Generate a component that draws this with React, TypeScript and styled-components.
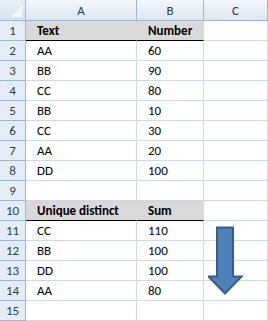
import { Fragment } from "react";
import styled, { createGlobalStyle } from "styled-components";

const GlobalStyle = createGlobalStyle`
  html, body {
    margin: 0;
    padding: 0;
    background: #ffffff;
  }
`;

const COLS = ["A", "B", "C"];

const ROWS: { a?: string; b?: string; head?: boolean }[] = [
  { a: "Text", b: "Number", head: true },
  { a: "AA", b: "60" },
  { a: "BB", b: "90" },
  { a: "CC", b: "80" },
  { a: "BB", b: "10" },
  { a: "CC", b: "30" },
  { a: "AA", b: "20" },
  { a: "DD", b: "100" },
  {},
  { a: "Unique distinct", b: "Sum", head: true },
  { a: "CC", b: "110" },
  { a: "BB", b: "100" },
  { a: "DD", b: "100" },
  { a: "AA", b: "80" },
  {},
];

const Sheet = styled.div`
  position: relative;
  display: grid;
  grid-template-columns: 26px 111px 67px 64px;
  grid-template-rows: 21px repeat(15, 20px);
  width: 268px;
  font-family: Calibri, "Liberation Sans", Arial, sans-serif;
  font-size: 13px;
  color: #000;
`;

const Corner = styled.div`
  position: relative;
  box-sizing: border-box;
  border-right: 1px solid #9eb6ce;
  border-bottom: 1px solid #9eb6ce;
  background: linear-gradient(#e9eff8, #d7e2f1);

  &::after {
    content: "";
    position: absolute;
    right: 3px;
    bottom: 3px;
    width: 0;
    height: 0;
    border-left: 11px solid transparent;
    border-bottom: 11px solid #f4f7fb;
  }
`;

const ColHead = styled.div`
  box-sizing: border-box;
  display: flex;
  align-items: center;
  justify-content: center;
  border-right: 1px solid #9eb6ce;
  border-bottom: 1px solid #9eb6ce;
  background: linear-gradient(#f4f7fc, #dde6f2);
  color: #27413e;
  font-size: 13px;
`;

const RowHead = styled.div`
  box-sizing: border-box;
  display: flex;
  align-items: center;
  justify-content: center;
  border-right: 1px solid #9eb6ce;
  border-bottom: 1px solid #9eb6ce;
  background: #e4ecf7;
  color: #27413e;
  font-size: 13px;
`;

const Cell = styled.div<{ $head?: boolean }>`
  box-sizing: border-box;
  display: flex;
  align-items: center;
  padding-left: 11px;
  white-space: nowrap;
  border-right: 1px solid ${(p) => (p.$head ? "#d9d9d9" : "#d0d7e5")};
  border-bottom: 1px solid ${(p) => (p.$head ? "#000000" : "#d0d7e5")};
  background: ${(p) => (p.$head ? "#d9d9d9" : "#ffffff")};
  font-weight: ${(p) => (p.$head ? 700 : 400)};
`;

const Blank = styled.div`
  box-sizing: border-box;
  border-right: 1px solid #d0d7e5;
  border-bottom: 1px solid #d0d7e5;
`;

const ArrowShape = styled.svg`
  position: absolute;
  left: 208px;
  top: 226px;
`;

function DownArrow() {
  return (
    <ArrowShape width="36" height="70" viewBox="0 0 36 70">
      <path
        d="M9 1.5 H25 V50.5 H33.5 L17 67.5 L0.5 50.5 H9 Z"
        fill="#4f81bd"
        stroke="#385d8a"
        strokeWidth="2"
      />
    </ArrowShape>
  );
}

export default function App() {
  return (
    <>
      <GlobalStyle />
      <Sheet>
        <Corner />
        {COLS.map((c) => (
          <ColHead key={c}>{c}</ColHead>
        ))}
        {ROWS.map((r, i) => (
          <Fragment key={i}>
            <RowHead>{i + 1}</RowHead>
            <Cell $head={r.head}>{r.a}</Cell>
            <Cell $head={r.head}>{r.b}</Cell>
            <Blank />
          </Fragment>
        ))}
        <DownArrow />
      </Sheet>
    </>
  );
}
